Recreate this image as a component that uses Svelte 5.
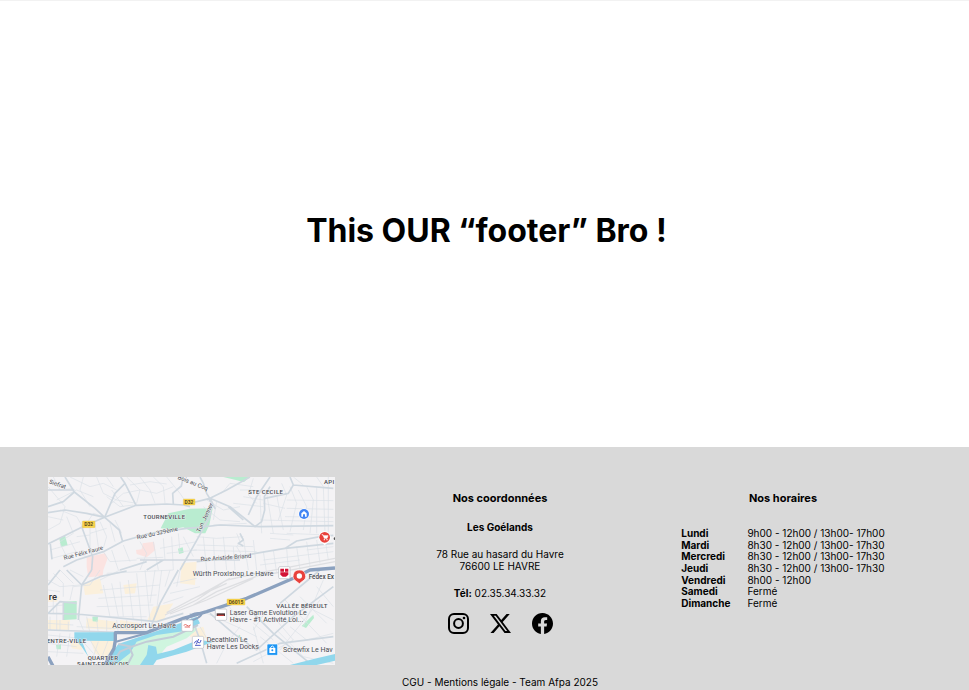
<script>
  const hours = [
    ['Lundi', '9h00 - 12h00 / 13h00- 17h00'],
    ['Mardi', '8h30 - 12h00 / 13h00- 17h30'],
    ['Mercredi', '8h30 - 12h00 / 13h00- 17h30'],
    ['Jeudi', '8h30 - 12h00 / 13h00- 17h30'],
    ['Vendredi', '8h00 - 12h00'],
    ['Samedi', 'Fermé'],
    ['Dimanche', 'Fermé'],
  ];

  const lanes = [
    'M24 50L75 110L60 160L24 180M50 90L110 60L160 80M40 21L60 60L100 55M90 21L150 50L190 40L230 60M130 21L120 60L150 110M170 21L190 70L230 90L290 100M60 120L110 140L130 175L160 130L190 140M80 140L100 190L60 215M24 140L70 150M200 21L220 50M215 100L250 70L300 60L350 70L400 50M260 21L300 60L290 100M300 21L330 60L345 100M340 21L370 50L375 100M380 21L420 70L440 100M270 45L330 35L380 42M200 80L240 110L280 105M215 60L250 110',
    'M150 155L150 235M165 160L175 230M180 155L200 200L190 235M150 190L200 175M110 200L150 195M210 160L225 215M225 150L245 190M90 210L110 250M60 220L80 260M30 240L120 215M36 265L110 245L140 262M190 245L210 275L290 270M215 240L235 300M250 225L270 275M300 215L320 250L300 300M340 215L355 300M370 205L375 270M395 200L400 300M415 190L420 245M430 200L460 260M290 265L370 262M360 235L470 215M380 250L470 240',
    'M490 110L540 150L600 155M500 90L550 120L600 110M530 95L520 150M545 70L570 40L640 50M600 60L640 60L700 75M640 25L625 75L650 100M610 80L670 90M580 100L670 110M660 75L665 190M680 70L700 190M710 75L730 180M725 40L740 75L715 150M750 50L770 100L750 185M775 60L800 110L790 180M800 50L820 90L810 190M830 50L830 190M850 50L855 190M670 100L735 115M740 90L880 92M740 115L880 118M735 140L880 142M660 150L880 155M520 165L620 160M760 21L790 45M830 21L850 50M865 21L865 190',
    'M590 190L600 215L590 230L602 250M690 190L760 195M690 205L750 210M740 190L860 195M470 200L530 205L610 200M470 225L640 230M460 240L650 245M490 200L500 300M520 205L525 300M550 200L560 300M580 230L585 300M610 205L625 300M640 210L650 300M670 245L680 310M700 240L710 310M740 235L745 300M770 230L780 300M800 215L810 290M830 210L840 280M855 205L865 270M670 270L880 245M660 285L780 270M800 240L880 230',
    'M180 300L150 345L100 350M190 345L210 440M215 340L235 440M240 335L250 440M265 330L280 450M290 310L305 460M315 300L330 450M345 300L330 400M365 300L350 420M200 310L400 300M180 360L360 345M175 385L350 375M170 410L340 405M165 440L320 440M240 300L180 330M390 300L375 350M420 300L410 350M400 340L470 325M390 370L480 350M370 400L430 380',
    'M24 330L60 350L120 345M40 310L70 340L70 380M24 360L60 365M24 410L70 405M30 440L30 480M60 450L60 480M85 455L85 480M50 400L50 480M24 460L100 465M110 430L130 480M140 440L150 490M170 450L175 490M200 450L200 490M230 450L235 490M260 450L260 480M110 470L320 480M100 345L90 390M40 380L40 430M24 495L120 505L160 550M60 490L50 560M90 490L80 560M24 520L110 530M24 545L130 550M150 510L190 575M175 515L155 575M205 510L180 575M230 520L200 560M60 300L100 340M90 300L130 320',
    'M640 470L670 580M700 440L760 510M780 380L860 460M830 350L880 410M680 420L640 480M840 390L720 540M760 510L640 575M500 430L590 470L650 500M600 470L560 520L530 580M640 460L700 510M710 480L790 560L880 580M750 470L800 510L880 490M560 400L590 440M660 500L760 580M820 420L880 450M480 470L520 540M850 330L790 470M735 390L860 520',
  ];

  const roads = [
    'M24 222L128 170L194 142L288 106L380 102L430 105',
    'M24 128L75 120L140 130L194 142M75 21L103 66L165 115L194 142L238 180L248 215M103 66L70 95L24 110M24 60L103 60M194 142L225 70L255 40L242 21M255 40L288 106M125 170L158 260L155 300M31 222L36 268M128 170L160 157',
    'M70 290L110 270L190 245L250 213L330 190L440 175L470 173M250 213L190 245',
    'M400 102L398 70L424 48L430 21M430 105L510 85L560 60L630 21M505 85L525 115L515 95L500 70L490 40L480 21M430 105L450 110M510 85L570 110L620 150L645 170L665 155L674 120L673 80L690 50M690 21L650 80L625 135M565 110L610 150',
    'M470 173L540 165L660 170L880 167M515 95L510 140L465 220L420 300M675 85L745 70L760 45L880 55M750 21L760 45',
    'M470 275L560 265L735 235L880 220M735 235L770 213L840 200L880 196M600 190L610 210L595 220L610 228',
    'M300 270L600 270M240 300L320 275M320 300L370 270',
    'M80 300L125 345L180 320L260 303M125 345L115 450M24 430L110 432L350 455L430 430M70 395L70 450M24 430L60 395L110 400M24 345L60 300M155 300L125 345M415 300L360 400L325 490M24 480L320 490',
    'M450 430L480 510L500 580M510 430L580 490L650 540L760 440L880 350M590 580L720 520L880 500M620 410L700 490L810 580M840 300L720 400',
  ];
</script>

<main>
  <section class="hero">
    <h1>This OUR “footer” Bro !</h1>
  </section>

  <footer>
    <svg class="map" viewBox="24 21 861 564" role="img" aria-label="Plan du Havre" preserveAspectRatio="xMidYMid slice">
      <rect x="24" y="21" width="861" height="564" fill="#f4f3f5" />

      <g fill="#fbf0dc">
        <path d="M130 345L180 325L190 370L135 375zM24 450L90 450L88 480L24 478zM140 445L230 455L225 480L138 475zM150 505L230 515L200 570L165 550zM250 345L290 340L285 370L255 372zM340 410L400 400L370 450L320 455zM90 510L130 515L125 540L95 535zM425 280L470 275L465 345L420 340zM24 378L60 380L50 395L24 395zM450 480L490 470L500 505L450 500zM240 450L300 460L290 485L240 482z" />
      </g>
      <g fill="#fbe3e1">
        <path d="M140 262L195 250L203 265L190 300L188 318L145 322L140 290zM288 240L305 238L308 220L342 215L346 240L320 262L290 252zM720 300L750 298L752 318L725 320z" />
      </g>
      <g fill="#b9ecd0">
        <path d="M58 206L75 196L83 226L63 231zM362 175L385 130L450 116L518 115L508 165L496 190L465 190L430 172L395 178zM414 236L428 232L431 248L417 252zM550 21L628 21L612 36zM70 395L110 393L110 448L72 450zM157 440L174 438L173 455L158 454zM48 525L63 523L63 538L50 538zM785 468L820 434L822 444L798 474zM590 500L600 494L602 505z" />
      </g>
      <path d="M270 515L470 445L470 480L440 505L380 530L330 590L235 590L210 560z" fill="#cff5df" />

      <g stroke="#dbe1e7" fill="none" stroke-width="2">
        {#each lanes as d}<path {d} />{/each}
      </g>
      <g stroke="#cfd8e0" fill="none" stroke-width="5" stroke-linejoin="round">
        {#each roads as d}<path {d} />{/each}
      </g>

      <g stroke="#dedfe2" fill="none" stroke-width="4">
        <path d="M375 435L470 390L560 330L650 310M380 428L480 375L570 325M390 432L500 390L640 325M460 405L530 365L660 315M450 390L560 340M650 310L885 265M660 318L885 275" />
      </g>

      <g fill="#91d7ec">
        <path d="M103 487L222 487L222 513L125 512L145 560L125 530L103 505zM235 522L330 490L420 460L470 440L480 460L440 482L350 495L290 515L270 550L225 585L195 585L215 550zM300 585L320 555L325 525L348 530L352 552L400 540L474 510L520 515L440 545L350 570L340 585zM750 585L830 565L885 552L885 572L830 585z" />
      </g>
      <g stroke="#c2ccd7" fill="none" stroke-width="6">
        <path d="M235 522L275 530L320 515L400 500L474 465M270 535L278 555L262 585M275 530L240 545L215 585" />
      </g>
      <g stroke="#8ba1bf" fill="none" stroke-width="10" stroke-linejoin="round">
        <path d="M24 560L40 590M192 590L222 535L226 510L226 488L320 488L430 445L500 425L620 385L760 325L810 300L885 294" />
        <path d="M228 515L320 490" stroke-width="6" />
        <path d="M440 450Q455 425 485 430Q485 445 440 455" stroke-width="6" />
      </g>

      <g class="tag">
        <rect x="127" y="153" width="38" height="20" rx="2" />
        <rect x="430" y="87" width="35" height="18" rx="2" />
        <rect x="561" y="387" width="54" height="18" rx="2" />
      </g>
      <g class="label code">
        <text x="146" y="169">D32</text>
        <text x="447" y="102">D32</text>
        <text x="588" y="402">D6015</text>
      </g>

      <g class="label district">
        <text x="373" y="147">TOURNEVILLE</text>
        <text x="677" y="73">STE CECILE</text>
        <text x="868" y="43">API</text>
        <text x="786" y="413">VALLÉE BÉREULT</text>
        <text x="80" y="518">ENTRE-VILLE</text>
        <text x="189" y="570">QUARTIER</text>
        <text x="189" y="587">SAINT-FRANÇOIS</text>
      </g>
      <g class="label street">
        <text transform="translate(26 40) rotate(19)">Siefrat</text>
        <text transform="translate(412 26) rotate(22)">Bois au Coq</text>
        <text transform="translate(73 270) rotate(-15)">Rue Félix Faure</text>
        <text transform="translate(292 208) rotate(-12)">Rue du 329ème</text>
        <text transform="translate(480 188) rotate(-65)">Tun. Jenner</text>
        <text transform="translate(482 274) rotate(-4)">Rue Aristide Briand</text>
      </g>
      <text class="label city" x="51" y="391">re</text>

      <g fill="#fff" stroke="#b9bdc4" stroke-width="2">
        <rect x="716" y="290" width="34" height="36" rx="4" />
        <rect x="526" y="417" width="34" height="34" rx="4" />
        <rect x="425" y="450" width="34" height="34" rx="4" />
        <rect x="457" y="499" width="34" height="36" rx="4" />
      </g>
      <g class="label place">
        <text x="217" y="473">Accrosport Le Havre</text>
        <text x="458" y="317">Würth Proxishop Le Havre</text>
        <text x="569" y="434">Laser Game Evolution Le</text>
        <text x="569" y="455">Havre - #1 Activité Loi...</text>
        <text x="500" y="516">Decathlon Le</text>
        <text x="500" y="537">Havre Les Docks</text>
        <text x="729" y="547">Screwfix Le Hav</text>
        <text class="strong" x="806" y="328">Fedex Ex</text>
      </g>
      <path d="M721 296H732V305H721zM735 296H745V305H735zM721 307H745V314L738 320H728L721 314z" fill="#d31336" />
      <path d="M530 430H555V438H530z" fill="#4b3436" />
      <path d="M533 436H552" stroke="#d8423c" stroke-width="3" />
      <path d="M431 466Q437 461 441 466T452 465M434 471H450" stroke="#e36d69" stroke-width="3" fill="none" />
      <path d="M463 520Q468 508 474 516T483 510M465 526H482M476 507L469 523" stroke="#4c5bc5" stroke-width="3" fill="none" />

      <rect x="681" y="522" width="32" height="34" rx="3" fill="#1e96f4" stroke="#fff" stroke-width="2" />
      <path d="M688 534H706V549H688z" fill="#fff" />
      <path d="M692 535V532Q697 524 702 532V535" fill="none" stroke="#fff" stroke-width="3" />
      <circle cx="697" cy="541" r="3" fill="#1e96f4" />

      <circle cx="792" cy="132" r="17" fill="#fff" />
      <circle cx="792" cy="132" r="15" fill="#4285f4" />
      <path d="M784 140V130L792 123L800 130V140H795V133H789V140z" fill="#fff" />

      <path d="M854 184a18 18 0 0 1 10 33l-10 9l-10-9a18 18 0 0 1 10-33z" fill="#fff" />
      <circle cx="854" cy="202" r="16" fill="#e8413b" />
      <path d="M845 194H849L853 205H861L864 197H850" fill="#fff" stroke="#fff" stroke-width="2" />
      <circle cx="853" cy="209" r="2" fill="#fff" />
      <circle cx="861" cy="209" r="2" fill="#fff" />
      <circle cx="885" cy="206" r="4" fill="#555" />

      <path d="M778 300a18 18 0 0 1 9 34l-9 7l-9-7a18 18 0 0 1 9-34z" fill="#e8413b" stroke="#fff" stroke-width="2" />
      <circle cx="778" cy="318" r="8" fill="#fff" />
    </svg>

    <section class="contact">
      <h2>Nos coordonnées</h2>
      <h3>Les Goélands</h3>
      <address>78 Rue au hasard du Havre<br />76600 LE HAVRE</address>
      <p><strong>Tél:</strong> 02.35.34.33.32</p>
      <nav aria-label="Réseaux sociaux">
        <a href="#instagram" aria-label="Instagram">
          <svg viewBox="0 0 21 21" fill="none" stroke="#000" stroke-width="2">
            <rect x="1" y="1" width="19" height="19" rx="5" />
            <circle cx="10.5" cy="10.5" r="4.4" />
            <circle cx="16" cy="5" r="1.3" fill="#000" stroke="none" />
          </svg>
        </a>
        <a href="#x" aria-label="X">
          <svg viewBox="0 0 16 16">
            <path d="M12.6.75h2.454l-5.36 6.142L16 15.25h-4.937l-3.867-5.07-4.425 5.07H.316l5.733-6.57L0 .75h5.063l3.495 4.633L12.601.75Zm-.86 13.028h1.36L4.323 2.145H2.865z" />
          </svg>
        </a>
        <a href="#facebook" aria-label="Facebook">
          <svg viewBox="0 0 16 16">
            <path d="M16 8.049c0-4.446-3.582-8.05-8-8.05C3.58 0-.002 3.603-.002 8.05c0 4.017 2.926 7.347 6.75 7.951v-5.625h-2.03V8.05H6.75V6.275c0-2.017 1.195-3.131 3.022-3.131.876 0 1.791.157 1.791.157v1.98h-1.009c-.993 0-1.303.621-1.303 1.258v1.51h2.218l-.354 2.326H9.25V16c3.824-.604 6.75-3.934 6.75-7.951" />
          </svg>
        </a>
      </nav>
    </section>

    <section class="hours">
      <h2>Nos horaires</h2>
      <table>
        <tbody>
          {#each hours as [day, time]}
            <tr><th scope="row">{day}</th><td>{time}</td></tr>
          {/each}
        </tbody>
      </table>
    </section>

    <p class="legal">CGU - Mentions légale - Team Afpa 2025</p>
  </footer>
</main>

<style>
  :global(body) {
    background: #fff;
  }
  main {
    display: flex;
    flex-direction: column;
    min-height: 100vh;
    box-sizing: border-box;
    border-top: 1px solid #f2f2f2;
    color: #000;
    font: 10px/12px Inter, "Liberation Sans", sans-serif;
    font-variation-settings: "opsz" 32;
  }
  h1, h2, h3, p, address {
    margin: 0;
    font-style: normal;
  }
  .hero {
    flex: 1;
    display: flex;
    align-items: center;
    justify-content: center;
    padding: 14px 0 0 4px;
  }
  h1 {
    font-size: 32px;
    line-height: 40px;
    font-weight: 700;
    font-variation-settings: normal;
  }
  footer {
    display: grid;
    grid-template-columns: 287px 1fr 236px;
    row-gap: 11px;
    padding: 30px 68px 2px 48px;
    background: #d9d9d9;
  }
  .map {
    display: block;
    width: 100%;
    height: 188px;
  }
  .contact, .hours {
    display: flex;
    flex-direction: column;
    align-items: center;
    padding-top: 14px;
    text-align: center;
  }
  h2 {
    font-size: 11px;
    line-height: 14px;
    font-weight: 700;
  }
  h3 {
    margin-top: 16px;
    font-size: 10px;
    line-height: 12px;
    font-weight: 700;
  }
  address, .contact p {
    margin-top: 15px;
  }
  nav {
    display: flex;
    gap: 21px;
    margin-top: 14px;
  }
  nav a, nav svg {
    display: block;
    width: 21px;
    height: 21px;
  }
  table {
    height: 81px;
    margin-top: 23px;
    border-collapse: collapse;
    line-height: 11px;
    text-align: left;
  }
  th, td {
    padding: 0;
  }
  th {
    padding-right: 17px;
    font-weight: 700;
  }
  .legal {
    grid-column: 2;
    text-align: center;
  }
  .tag {
    fill: #f8d34c;
    stroke: #e5bd3c;
  }
  .label {
    fill: #484b50;
    stroke: #f7f7f9;
    stroke-width: 2px;
    paint-order: stroke;
    font-family: Roboto, sans-serif;
    font-size: 18px;
  }
  .code {
    fill: #5d4c1c;
    stroke: none;
    font-size: 15px;
    font-weight: 700;
    text-anchor: middle;
  }
  .district {
    font-size: 18px;
    font-weight: 500;
    letter-spacing: 1px;
    text-anchor: middle;
  }
  .place {
    font-size: 21px;
  }
  .strong {
    font-size: 19px;
    font-weight: 500;
  }
  .city {
    fill: #303236;
    font-size: 28px;
    font-weight: 500;
    text-anchor: end;
  }
</style>
